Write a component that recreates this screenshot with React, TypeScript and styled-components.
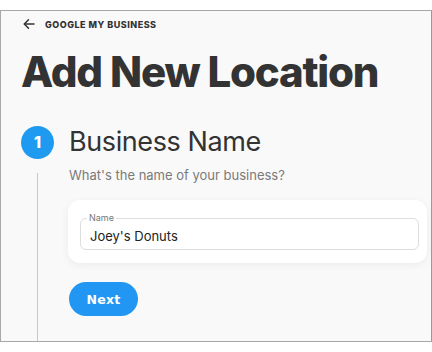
import React from "react";
import styled, { createGlobalStyle } from "styled-components";

const Global = createGlobalStyle`
  html, body { margin: 0; padding: 0; background: #ffffff; }
  body { font-family: "Inter", "Noto Sans", sans-serif; }
  * { box-sizing: border-box; }
`;

const Page = styled.div`
  padding-top: 10px;
  width: 432px;
`;

const Frame = styled.div`
  width: 432px;
  height: 332px;
  border: 1px solid #a8a8a8;
  border-right-color: #9a9a9a;
  background: #f9f9f9;
  display: flex;
  flex-direction: column;
  padding: 0 4px 0 20px;
  overflow: hidden;
`;

const TopBar = styled.div`
  margin-top: 6px;
  height: 14px;
  display: flex;
  align-items: center;
  gap: 10px;
  padding-left: 2px;
`;

const BackLink = styled.span`
  font-family: "Inter", sans-serif;
  font-weight: 800;
  font-size: 9px;
  letter-spacing: 0.5px;
  color: #333;
  text-transform: uppercase;
`;

const Title = styled.h1`
  margin: 15px 0 0;
  font-family: "Inter", sans-serif;
  font-weight: 800;
  font-size: 42px;
  line-height: 52px;
  letter-spacing: -1.2px;
  color: #333333;
`;

const Step = styled.div`
  margin-top: 27px;
  flex: 1;
  display: grid;
  grid-template-columns: 33px 1fr;
  grid-template-rows: 34px 1fr;
  column-gap: 15px;
  row-gap: 7px;
`;

const StepNumber = styled.div`
  width: 33px;
  height: 33px;
  border-radius: 50%;
  background: #1e9bf0;
  color: #fff;
  font-weight: 800;
  font-size: 16px;
  display: flex;
  align-items: center;
  justify-content: center;
  align-self: center;
`;

const StepTitle = styled.h2`
  margin: 0;
  font-family: "Inter", sans-serif;
  font-weight: 400;
  font-size: 27px;
  line-height: 34px;
  letter-spacing: -0.4px;
  color: #333;
`;

const Rail = styled.div`
  justify-self: center;
  width: 1px;
  margin-top: 7px;
  background: #c8c8c8;
`;

const StepBody = styled.div`
  display: flex;
  flex-direction: column;
  align-items: flex-start;
`;

const Prompt = styled.p`
  margin: 0;
  font-size: 13px;
  line-height: 18px;
  color: #7a7a7a;
`;

const Card = styled.div`
  margin-top: 16px;
  align-self: stretch;
  margin-left: -1px;
  background: #ffffff;
  border-radius: 12px;
  box-shadow: 0 2px 8px rgba(0, 0, 0, 0.06);
  padding: 18px 8px 13px 12px;
`;

const Field = styled.fieldset`
  margin: 0;
  height: 32px;
  border: 1px solid #dddddd;
  border-radius: 6px;
  padding: 0 9px;
  position: relative;
  display: flex;
  align-items: center;
`;

const FieldLabel = styled.legend`
  position: absolute;
  top: -6px;
  left: 6px;
  padding: 0 2px;
  background: #ffffff;
  font-size: 9px;
  line-height: 10px;
  color: #777;
`;

const FieldValue = styled.span`
  font-size: 13px;
  color: #222;
  padding-top: 3px;
`;

const NextButton = styled.button`
  margin-top: 19px;
  width: 69px;
  height: 34px;
  border: none;
  border-radius: 17px;
  background: #2196f3;
  color: #ffffff;
  font-family: "DejaVu Sans", "Verdana", sans-serif;
  font-weight: 700;
  font-size: 12.5px;
  letter-spacing: 0.3px;
  cursor: pointer;
`;

const ArrowIcon = () => (
  <svg width="12" height="12" viewBox="0 0 12 12" fill="none" stroke="#333" strokeWidth="1.5" strokeLinecap="round" strokeLinejoin="round">
    <path d="M11 6H1.5" />
    <path d="M5.5 1.8L1.3 6l4.2 4.2" />
  </svg>
);

export default function App() {
  return (
    <Page>
      <Global />
      <Frame>
        <TopBar>
          <ArrowIcon />
          <BackLink>Google My Business</BackLink>
        </TopBar>
        <Title>Add New Location</Title>
        <Step>
          <StepNumber>1</StepNumber>
          <StepTitle>Business Name</StepTitle>
          <Rail />
          <StepBody>
            <Prompt>What's the name of your business?</Prompt>
            <Card>
              <Field>
                <FieldLabel>Name</FieldLabel>
                <FieldValue>Joey's Donuts</FieldValue>
              </Field>
            </Card>
            <NextButton>Next</NextButton>
          </StepBody>
        </Step>
      </Frame>
    </Page>
  );
}
